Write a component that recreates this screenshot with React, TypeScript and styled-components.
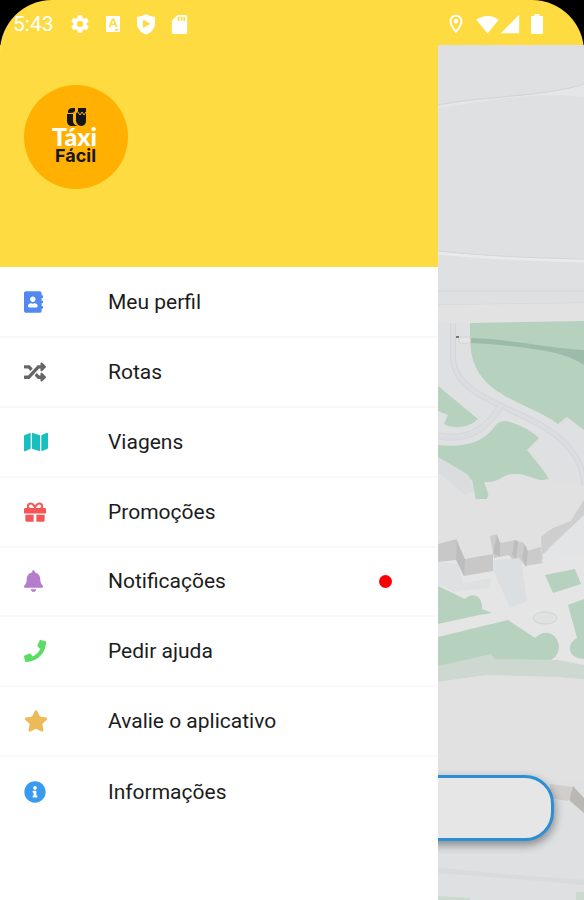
import React from "react";
import styled, { createGlobalStyle } from "styled-components";
import type { IconType } from "react-icons";
import {
  FaAddressBook,
  FaBell,
  FaGift,
  FaInfoCircle,
  FaMap,
  FaPhone,
  FaRandom,
  FaStar,
} from "react-icons/fa";
import {
  MdOutlineLocationOn,
  MdSdCard,
  MdSettings,
  MdSignalCellular4Bar,
  MdSignalWifi4Bar,
} from "react-icons/md";

const GlobalStyle = createGlobalStyle`
  *, *::before, *::after { box-sizing: border-box; }
  body {
    margin: 0;
    background: #000;
    font-family: Roboto, "Noto Sans", sans-serif;
  }
`;

const Screen = styled.div`
  display: flex;
  flex-direction: column;
  min-height: 100vh;
  overflow: hidden;
  border-radius: 52px 52px 0 0;
  background: #ffdb42;
`;

const StatusBar = styled.header`
  display: flex;
  align-items: center;
  justify-content: space-between;
  height: 45px;
  padding: 3px 40px 0 13px;
  color: #fff;
`;

const StatusGroup = styled.div<{ $gap: number }>`
  display: flex;
  align-items: center;
  gap: ${(p) => p.$gap}px;

  svg {
    display: block;
  }
`;

const Clock = styled.time`
  margin-right: 4px;
  font-size: 21px;
  line-height: 24px;
`;

const Body = styled.div`
  flex: 1;
  display: grid;
  grid-template-columns: 3fr 1fr;
`;

const Drawer = styled.aside`
  display: flex;
  flex-direction: column;
  min-width: 0;
  background: #fff;
  z-index: 1;
`;

const DrawerHeader = styled.div`
  height: 222px;
  padding: 40px 24px;
  background: #ffdb42;
`;

const Logo = styled.svg`
  display: block;
  width: 104px;
  height: 104px;
`;

const Menu = styled.ul`
  display: grid;
  grid-auto-rows: 1fr;
  min-height: 560px;
  margin: 0;
  padding: 1px 0 0;
  list-style: none;
`;

const MenuItem = styled.li`
  display: flex;

  &:not(:last-child) {
    border-bottom: 2px solid #f9f9f9;
  }
`;

const MenuButton = styled.button`
  flex: 1;
  display: flex;
  align-items: center;
  padding: 0 46px 0 24px;
  border: 0;
  background: none;
  color: #1c1c1c;
  font: inherit;
  font-size: 21px;
  line-height: 28px;
  text-align: left;
  cursor: pointer;
`;

const IconSlot = styled.span<{ $color: string; $width: number }>`
  flex: 0 0 84px;
  color: ${(p) => p.$color};

  svg {
    display: block;
    width: ${(p) => p.$width}px;
    height: 22px;
  }
`;

const Label = styled.span`
  flex: 1;
`;

const UnreadDot = styled.span`
  width: 13px;
  height: 13px;
  border-radius: 50%;
  background: #fb0007;
`;

const MapArea = styled.main`
  position: relative;
  min-width: 0;
  background: #e1e1e1;
`;

const MapDrawing = styled.svg`
  position: absolute;
  inset: 0;
  width: 100%;
  height: 100%;
`;

const DestinationButton = styled.button`
  position: absolute;
  right: 30px;
  bottom: 59px;
  width: 300%;
  height: 66px;
  border: 3px solid #2a8fd4;
  border-radius: 29px;
  background: #e6e6e6;
  box-shadow: 1px 4px 10px rgba(0, 0, 0, 0.4);
`;

type Entry = {
  label: string;
  icon: IconType;
  color: string;
  width: number;
  unread?: boolean;
};

const entries: Entry[] = [
  { label: "Meu perfil", icon: FaAddressBook, color: "#5089f0", width: 19 },
  { label: "Rotas", icon: FaRandom, color: "#666666", width: 22 },
  { label: "Viagens", icon: FaMap, color: "#16bfc0", width: 24 },
  { label: "Promoções", icon: FaGift, color: "#f75555", width: 22 },
  { label: "Notificações", icon: FaBell, color: "#b57bcd", width: 19, unread: true },
  { label: "Pedir ajuda", icon: FaPhone, color: "#5bdc64", width: 22 },
  { label: "Avalie o aplicativo", icon: FaStar, color: "#ecbb58", width: 24 },
  { label: "Informações", icon: FaInfoCircle, color: "#389bf0", width: 22 },
];

const KeyboardIcon = () => (
  <svg width="22" height="22" viewBox="0 0 22 22" aria-hidden="true">
    <path
      fill="currentColor"
      fillRule="evenodd"
      d="M4 3h14v16H4zM10 5.500 6.500 14h2l.7-2h3.600l.7 2h2L12 5.500zM9.800 10.400 11 7.200l1.200 3.200zM13 16v1.500h3.500V16z"
    />
  </svg>
);

const ShieldIcon = () => (
  <svg width="22" height="22" viewBox="0 0 22 22" aria-hidden="true">
    <path
      fill="currentColor"
      fillRule="evenodd"
      d="M11 1c2.500 1.700 5.500 2.600 9 2.700V10c0 5.500-3.400 9.600-9 11.500C5.400 19.600 2 15.500 2 10V3.700C5.500 3.600 8.500 2.700 11 1zM8 6.500v8.500l7.500-4.200z"
    />
  </svg>
);

const BatteryIcon = () => (
  <svg width="14" height="22" viewBox="0 0 14 22" aria-hidden="true">
    <path
      fill="currentColor"
      d="M4.500 1h5v2H12a1 1 0 0 1 1 1v16a1 1 0 0 1-1 1H2a1 1 0 0 1-1-1V4a1 1 0 0 1 1-1h2.500z"
    />
  </svg>
);

const TaxiLogo = () => (
  <Logo viewBox="0 0 104 104" role="img" aria-label="Táxi Fácil">
    <circle cx="52" cy="52" r="52" fill="#ffb000" />
    <path fill="#161616" d="M44 26q1-3 4-3h3v3q-1 2-4 2h-3z" />
    <path
      fill="#161616"
      d="M43 29h6v7q0 4 5 5h-6q-5 0-5-5zM54 23h8v13q0 4-4 5-5 0-6-5v-8q2 0 2-2z"
    />
    <path d="m54 27 2 3 2-3 2 3 2-3" fill="none" stroke="#ffb000" />
    <text x="28" y="61" fontFamily="Lato, sans-serif" fontSize="25" fontWeight="900" fill="#fff">
      Táxi
    </text>
    <text x="31" y="77" fontFamily="Inter, sans-serif" fontSize="18" fontWeight="700" fill="#161616">
      Fácil
    </text>
  </Logo>
);

const CityMap = () => (
  <MapDrawing viewBox="438 45 146 855" preserveAspectRatio="xMinYMin slice" aria-hidden="true">
    <path fill="#dee0e2" d="M438 45h146v260H438z" />
    <path d="M438 106C480 97 545 97 584 84v13c-26-3-60-2-90 3-20 3-40 5-56 9z" fill="#e5e6e7" />
    <path fill="#dee0e2" d="M438 110c50-8 96-13 146-12v20H438z" />
    <path d="M438 105C480 96 545 97 584 84" fill="none" stroke="#d2d4d6" />
    <path d="M438 253c48 5 96 7 146 8" fill="none" stroke="#e9eaeb" strokeWidth="3" />
    <path d="M438 251c48 5 96 7 146 8" fill="none" stroke="#d4d6d8" />
    <path d="M438 291h146M438 305l146-2" stroke="#d4d5d6" />
    <path fill="#e2e2e2" d="M438 305l146-2v20H438z" />

    <path fill="#dfe0e2" d="M438 323h146v160H438z" />
    <path
      fill="#b7d1bf"
      d="M470 323l114-2v109l-17-13-9 7C540 411 519 405 502 394c-22-13-32-30-32-57z"
    />
    <path fill="#9dbba9" d="M471 338c38 1 78 10 113 12v15c-14-9-29-13-45-15-23-4-46-6-68-7z" />
    <path fill="#b7d1bf" d="M438 386l40 33c-8 8-22 11-34 5l4-9-10-4z" />
    <path
      fill="#e2e2e3"
      d="M438 445c20 3 40 0 52-11 6-6 9-13 14-16 12 2 24 8 34 18l-12 13 24 31H438z"
    />
    <path
      fill="#b7d1bf"
      d="M438 445c28 3 46-3 57-19 5-6 11-6 18-3 11 4 19 8 26 15l-12 12c7 9 15 17 22 29-13 4-21-6-34-5-13-1-13 9-31 8l5 14-3 4h-10l-4-20-17-8-17-10z"
    />
    <path
      d="M453 323v35c2 42 70 49 105 79 18 15 26 30 26 48"
      fill="none"
      stroke="#d3d5d9"
      strokeWidth="6"
    />
    <path
      d="M453 323v35c2 42 70 49 105 79 18 15 26 30 26 48"
      fill="none"
      stroke="#dbdde0"
      strokeWidth="4"
    />
    <path d="M438 436c31 5 48-6 64-32" fill="none" stroke="#d5d7da" strokeWidth="7" />
    <path d="M438 436c31 5 48-6 64-32" fill="none" stroke="#dcdde0" strokeWidth="5" />
    <path fill="#e5e5e5" stroke="#d3d4d5" d="M459 337h11v6h-11z" />
    <path fill="#777" d="M456 336h3v2h-3z" />

    <path fill="#e1e1e1" d="M438 457l30 18 7 24h12l6-16c15-8 28-10 43-2l14-2 34 14v53H438z" />
    <path fill="#d9dadb" d="M438 457l31 18 5 16-9 4-27-23z" opacity=".7" />
    <path fill="#d8dcdf" d="M584 515l-17 12-22 24-5 14 44-8z" />
    <path fill="#e5e5e6" d="M438 551h146v122H438z" />
    <path fill="#dfe0e2" d="M438 562l20 2 5 19 29-5-4 10-33 4-17-8z" />
    <path fill="#dcdfe2" d="M494 560l27-2 6 43-17 7-17-38z" />
    <path fill="#c8c8c8" d="M438 544l19-5 6 20 30-5v17l-29 5-8-16-18 2z" />
    <path fill="#e1e1e1" d="M457 539l33-6 4 20-29 6z" />
    <path fill="#cbcbcb" d="M490 536l7-2 2 8 14-4 4 3 8 2 2 8 14-4 2 16-18 3-6-8-7 1-3-4-15 3z" />
    <path fill="#bdbdbd" d="M457 541l8 18-1 17-8-17zM497 535l3 8v14l-7-4zM515 538l3 4-2 17-4-4zM525 543l3 9-2 15-4-9z" />
    <path fill="#e1e1e1" d="M498 528l19-3 24 6-4 16-9 3-5-8-8-2-14 3z" />
    <path fill="#cecece" d="M584 500l-9 14-4 7-20 8-10 8 1 18 8-7 13-6 8-10 13-11z" />
    <path fill="#e2e4e5" d="M584 515l-16 15-19 18-8 14 43-8z" />
    <path fill="#b7d1bf" d="M545 575l30-6 6 15-28 9z" />
    <ellipse cx="545" cy="618" rx="12" ry="6" fill="#dfe2e1" stroke="#cfd3d1" />

    <path
      fill="#b7d1bf"
      d="M438 586l27 13c8-8 18-2 17 10l10 4-13 2-41 9zM438 637l70-17 27 18c10-10 23-5 24 9 0 8-6 12-10 14l-111 6zM568 605l16-6v60c-18-1-17-16-7-21z"
    />
    <path fill="#cdd8d0" d="M438 666l53-12 4 5 63 1 26 5v14l-30-2-67-2-49 7z" />
    <path fill="#e1e1e1" d="M438 682l49-7 67 2 30 3v100H438z" />
    <path fill="#dee0e1" d="M438 780h146v120H438z" />
    <path fill="#d1cecb" d="M550 784l23 3-5 14-18-3z" />
    <path fill="#bbb8b3" d="M573 786l11 12v15l-15-13z" />
    <path d="M438 867c50 7 97 9 146 13v5c-50-5-96-8-146-12z" fill="#d8dbdc" />
    <path fill="#cbd9cf" d="M438 896l32 2v2h-32zM576 892h8v8h-8z" />
  </MapDrawing>
);

export default function App() {
  return (
    <>
      <GlobalStyle />
      <Screen>
        <StatusBar>
          <StatusGroup $gap={11}>
            <Clock>5:43</Clock>
            <MdSettings size={22} aria-hidden="true" />
            <KeyboardIcon />
            <ShieldIcon />
            <MdSdCard size={23} aria-hidden="true" />
          </StatusGroup>
          <StatusGroup $gap={9}>
            <MdOutlineLocationOn size={22} aria-hidden="true" />
            <StatusGroup $gap={0}>
              <MdSignalWifi4Bar size={23} aria-hidden="true" />
              <MdSignalCellular4Bar size={22} aria-hidden="true" />
            </StatusGroup>
            <BatteryIcon />
          </StatusGroup>
        </StatusBar>
        <Body>
          <Drawer>
            <DrawerHeader>
              <TaxiLogo />
            </DrawerHeader>
            <nav aria-label="Menu">
              <Menu>
                {entries.map(({ label, icon: Icon, color, width, unread }) => (
                  <MenuItem key={label}>
                    <MenuButton type="button">
                      <IconSlot $color={color} $width={width}>
                        <Icon aria-hidden="true" />
                      </IconSlot>
                      <Label>{label}</Label>
                      {unread && <UnreadDot aria-label="Novas notificações" />}
                    </MenuButton>
                  </MenuItem>
                ))}
              </Menu>
            </nav>
          </Drawer>
          <MapArea>
            <CityMap />
            <DestinationButton type="button" aria-label="Escolher destino" />
          </MapArea>
        </Body>
      </Screen>
    </>
  );
}
